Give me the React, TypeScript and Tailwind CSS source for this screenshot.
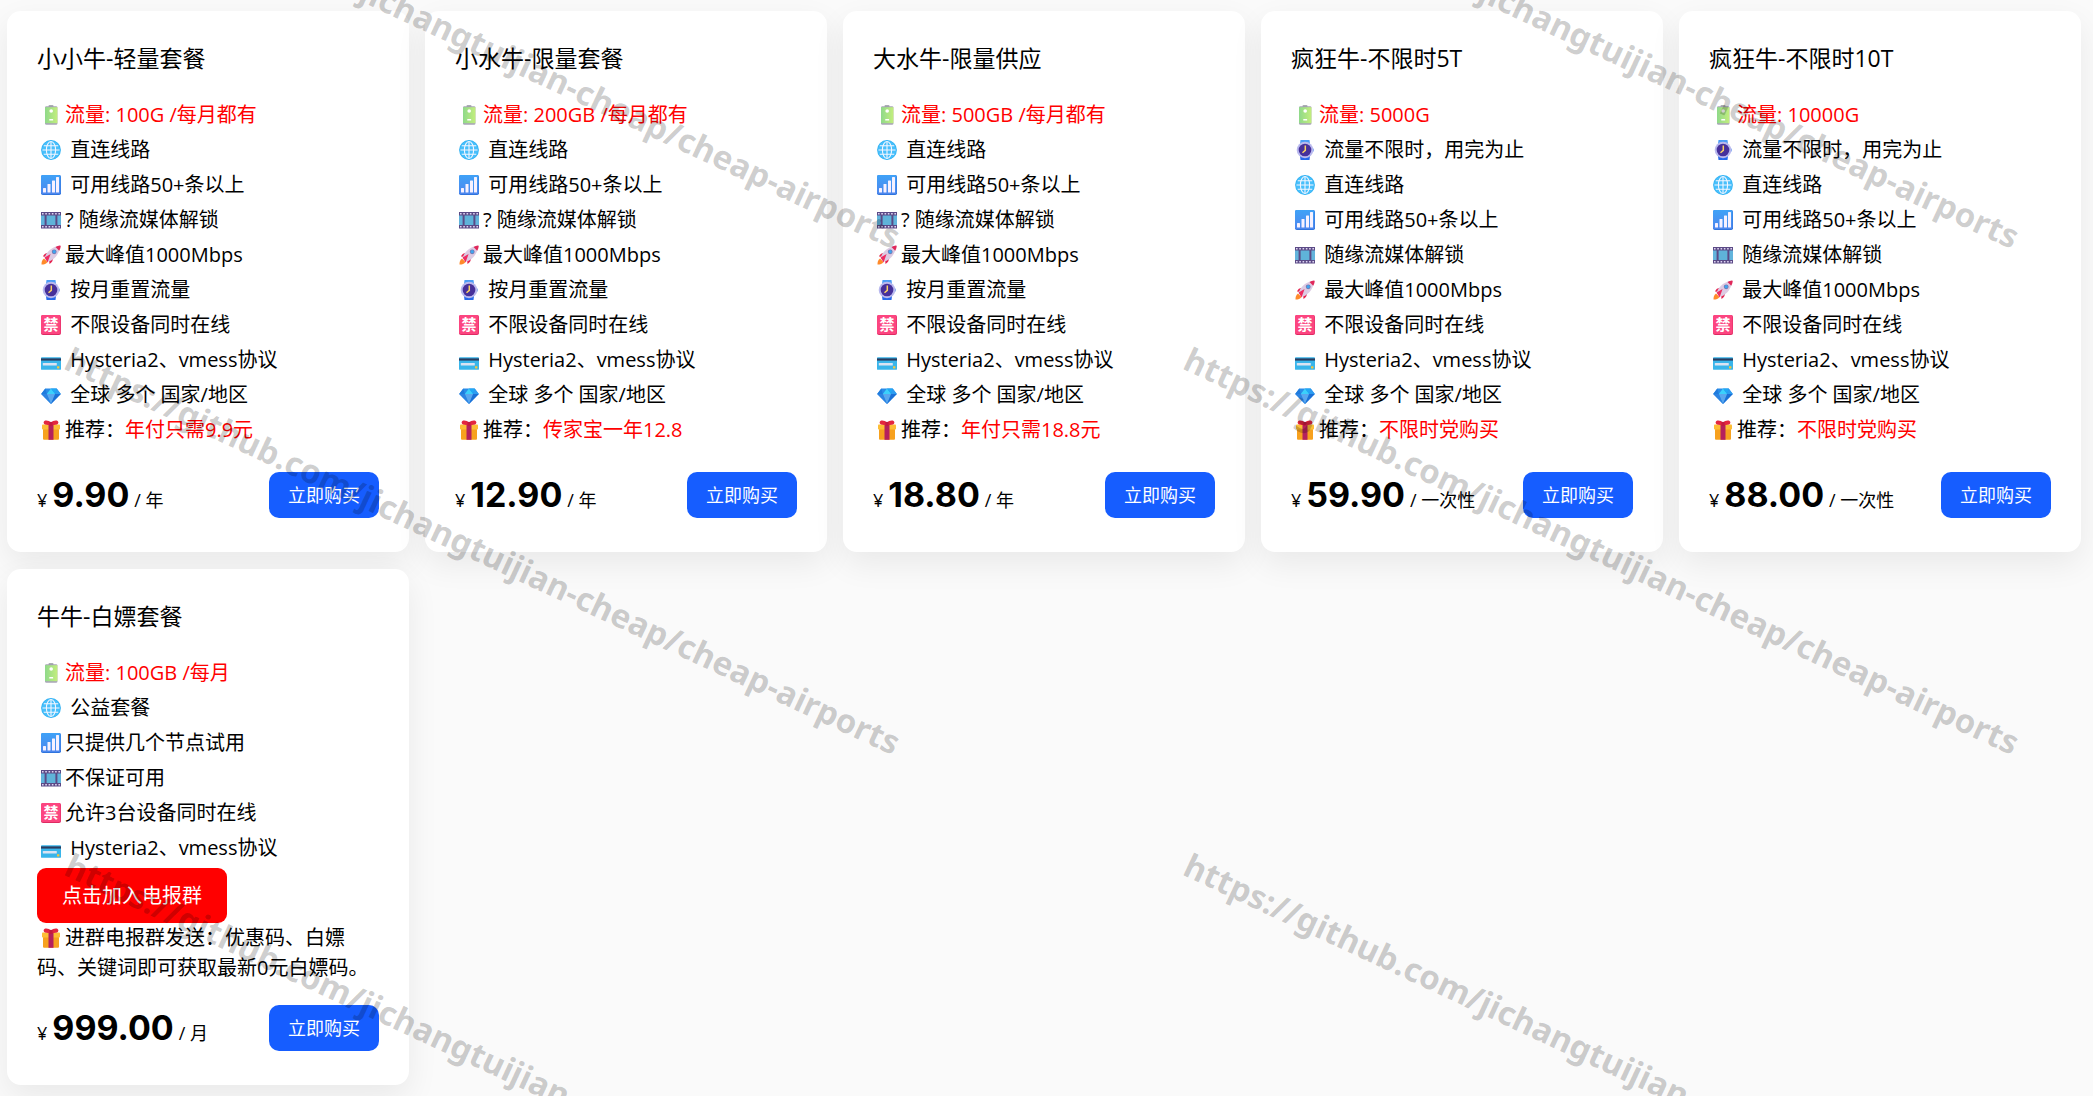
import React from "react";

type IconName =
  | "battery" | "globe" | "bars" | "film" | "rocket"
  | "watch" | "ban" | "card" | "gem" | "gift";

function Shape({ name }: { name: IconName }) {
  switch (name) {
    case "battery":
      return (
        <>
          <rect x="7.5" y="0.2" width="5" height="2" rx="0.8" fill="#8f9299" />
          <rect x="4" y="1.2" width="12.4" height="18.6" rx="1.4" fill="#a9a5b8" />
          <rect x="4" y="2.2" width="12.4" height="16" fill="url(#batteryFill)" />
          <circle cx="10.2" cy="6" r="1.8" fill="#fff" />
          <rect x="8.2" y="14" width="4" height="1.6" rx="0.4" fill="#fff" />
        </>
      );
    case "globe":
      return (
        <>
          <circle cx="10" cy="10" r="9.9" fill="#2eb0f2" />
          <circle cx="10" cy="10" r="9.2" fill="#48bffb" />
          <g fill="none" stroke="#f3f6ff" strokeWidth="1.1">
            <path d="M10 1.500v17M1.500 10h17M2.800 5.800h14.400M2.800 14.200h14.400" />
            <ellipse cx="10" cy="10" rx="4.6" ry="8.5" />
          </g>
        </>
      );
    case "bars":
      return (
        <>
          <rect width="20" height="20" rx="1.8" fill="#2f74dd" />
          <rect width="19.5" height="19" rx="1.6" fill="url(#barsFill)" />
          <g fill="#f6f1ff">
            <rect x="2" y="13" width="3" height="4.5" rx="0.5" />
            <rect x="6.5" y="9" width="3" height="8.5" rx="0.5" />
            <rect x="11" y="5.5" width="3" height="12" rx="0.5" />
            <rect x="15" y="2" width="3" height="15.5" rx="0.5" />
          </g>
        </>
      );
    case "film":
      return (
        <>
          <rect y="2" width="20" height="16.5" fill="#5b4a86" />
          <rect y="5.5" width="3.6" height="9.5" fill="#62b4dc" />
          <rect x="5.6" y="5.5" width="8.8" height="9.5" fill="#5fb3d9" />
          <rect x="16.4" y="5.5" width="3.6" height="9.5" fill="#62b4dc" />
          <path d="M1 3.800h18M1 16.700h18" stroke="#ded4f2" strokeWidth="1.5" strokeDasharray="1.6 1.68" />
        </>
      );
    case "rocket":
      return (
        <>
          <path d="M0.500 19.500c0-3 0.500-4.500 2.500-6l3.500 3.500c-1.500 2-3 2.500-6 2.500z" fill="#ff8a2a" />
          <path d="M7 8C4.500 8 3 9 2 11.500L6 12zM12 13c0 2.500-1 4.500-3.500 6L8 14z" fill="#e5234f" />
          <path d="M3.600 13.200c1.200-5 5.600-10.800 14.600-12.400 0.700 0 1 0.400 1 1C17.600 10.800 12 15.600 7 16.800z" fill="#dccbe3" />
          <path d="M14.500 2c1.500-0.800 3-1.200 4.500-1.400 0.500 0 0.800 0.300 0.700 0.800-0.200 1.500-0.700 3-1.500 4.300z" fill="#e0285a" />
          <circle cx="13.2" cy="6.8" r="2.4" fill="#7d70a8" />
          <circle cx="13.2" cy="6.8" r="1.7" fill="#3fa4ee" />
          <path d="M3.600 12.600L9.600 9l-2 5.400-1 3.200z" fill="#ee2c62" />
        </>
      );
    case "watch":
      return (
        <>
          <path d="M5.500 0h9l0.500 4H5z" fill="#4b9cf5" />
          <path d="M5 16h10l-0.500 4h-9z" fill="#2668ea" />
          <rect x="17" y="8.5" width="2" height="3" rx="0.6" fill="#8db2f0" />
          <circle cx="10" cy="10" r="8.3" fill="#b9b9ee" />
          <circle cx="10" cy="10" r="6.3" fill="#46309a" />
          <path d="M10.300 5.500v4.800l-2.800 2.500" fill="none" stroke="#fbd264" strokeWidth="1.5" />
        </>
      );
    case "ban":
      return (
        <>
          <rect width="20" height="20" rx="2" fill="#de2b62" />
          <rect width="19.5" height="19" rx="1.8" fill="#fc4580" />
          <text x="10" y="15" textAnchor="middle" fontSize="15" fontWeight="700" fill="#fff">禁</text>
        </>
      );
    case "card":
      return (
        <>
          <rect y="7.2" width="20" height="12.6" rx="0.9" fill="#39b5ea" />
          <path d="M0 8.400h20v2.200H0z" fill="#2b3c5e" />
          <rect x="1.8" y="13" width="14" height="2.6" rx="0.5" fill="#dbe3f2" />
          <rect x="16" y="16.2" width="2.4" height="2.2" rx="0.4" fill="#f5c63d" />
        </>
      );
    case "gem":
      return (
        <>
          <path d="M4.300 3.600h11.400L19.800 9 10 19 0.200 9z" fill="#2b8ce8" />
          <path d="M4.300 3.600L0.200 9h5.600z" fill="#1f7bdd" />
          <path d="M5.800 9L10 3.600 14.200 9z" fill="#3bd0fb" />
          <path d="M10 3.600h5.700L14.200 9z" fill="#21a8f5" />
          <path d="M15.700 3.600L19.800 9h-5.600z" fill="#2d9cf0" />
          <path d="M5.800 9h8.400L10 19z" fill="#5aa7ee" />
          <path d="M0.200 9h5.600L10 19z" fill="#2c83e2" />
          <path d="M14.200 9h5.600L10 19z" fill="#1b70d6" />
        </>
      );
    case "gift":
      return (
        <>
          <rect x="2" y="8.5" width="16" height="11.3" rx="1" fill="#f7a11e" />
          <rect x="1" y="4.5" width="18" height="5" rx="0.8" fill="#fdbd35" />
          <rect x="7.5" y="4.5" width="5" height="15.3" fill="#b5205c" />
          <path d="M10 4.800C6.500 5.300 2.800 5.200 2.600 2.600 2.500-0.600 8 0 10 2.600 12 0 17.500-0.600 17.400 2.600 17.200 5.200 13.500 5.300 10 4.800z" fill="#e3263f" />
          <path d="M8.400 1.900h3.200v4H8.400z" fill="#c31a3e" />
        </>
      );
  }
}

function Icon({ name }: { name: IconName }) {
  return (
    <svg viewBox="0 0 20 20" aria-hidden="true" className="mr-1 ml-1 inline-block size-5 align-[-3px]">
      <Shape name={name} />
    </svg>
  );
}

type Feature = { icon: IconName; text?: string; red?: string; space?: boolean };
type Plan = {
  title: string;
  features: Feature[];
  price: string;
  period: string;
  group?: boolean;
};

const limited = (amount: string, tip: string): Feature[] => [
  { icon: "battery", red: `流量: ${amount} /每月都有` },
  { icon: "globe", text: "直连线路", space: true },
  { icon: "bars", text: "可用线路50+条以上", space: true },
  { icon: "film", text: "? 随缘流媒体解锁" },
  { icon: "rocket", text: "最大峰值1000Mbps" },
  { icon: "watch", text: "按月重置流量", space: true },
  { icon: "ban", text: "不限设备同时在线", space: true },
  { icon: "card", text: "Hysteria2、vmess协议", space: true },
  { icon: "gem", text: "全球 多个 国家/地区", space: true },
  { icon: "gift", text: "推荐：", red: tip },
];

const unlimited = (amount: string): Feature[] => [
  { icon: "battery", red: `流量: ${amount}` },
  { icon: "watch", text: "流量不限时，用完为止", space: true },
  { icon: "globe", text: "直连线路", space: true },
  { icon: "bars", text: "可用线路50+条以上", space: true },
  { icon: "film", text: "随缘流媒体解锁", space: true },
  { icon: "rocket", text: "最大峰值1000Mbps", space: true },
  { icon: "ban", text: "不限设备同时在线", space: true },
  { icon: "card", text: "Hysteria2、vmess协议", space: true },
  { icon: "gem", text: "全球 多个 国家/地区", space: true },
  { icon: "gift", text: "推荐：", red: "不限时党购买" },
];

const plans: Plan[] = [
  { title: "小小牛-轻量套餐", features: limited("100G", "年付只需9.9元"), price: "9.90", period: "年" },
  { title: "小水牛-限量套餐", features: limited("200GB", "传家宝一年12.8"), price: "12.90", period: "年" },
  { title: "大水牛-限量供应", features: limited("500GB", "年付只需18.8元"), price: "18.80", period: "年" },
  { title: "疯狂牛-不限时5T", features: unlimited("5000G"), price: "59.90", period: "一次性" },
  { title: "疯狂牛-不限时10T", features: unlimited("10000G"), price: "88.00", period: "一次性" },
  {
    title: "牛牛-白嫖套餐",
    features: [
      { icon: "battery", red: "流量: 100GB /每月" },
      { icon: "globe", text: "公益套餐", space: true },
      { icon: "bars", text: "只提供几个节点试用" },
      { icon: "film", text: "不保证可用" },
      { icon: "ban", text: "允许3台设备同时在线" },
      { icon: "card", text: "Hysteria2、vmess协议", space: true },
    ],
    price: "999.00",
    period: "月",
    group: true,
  },
];

function PlanCard({ plan }: { plan: Plan }) {
  return (
    <article className="rounded-[14px] bg-white px-[30px] pt-[30px] pb-[34px] shadow-[0_12px_32px_rgba(0,0,0,0.07)]">
      <h2 className="mb-[25px] text-[23px] leading-[34px]">{plan.title}</h2>
      <ul className="flow-root">
        {plan.features.map((f, i) => (
          <li key={i} className="mb-[5px] whitespace-nowrap">
            <Icon name={f.icon} />
            {f.space ? " " : ""}
            {f.text}
            {f.red && <span className="text-[#ff0000]">{f.red}</span>}
          </li>
        ))}
      </ul>
      {plan.group && (
        <>
          <a href="#group" className="inline-block rounded-[9px] bg-[#ff0000] px-[25px] py-3 align-top leading-[31px] text-white">
            点击加入电报群
          </a>
          <p>
            <Icon name="gift" />
            进群电报群发送：优惠码、白嫖码、关键词即可获取最新0元白嫖码。
          </p>
        </>
      )}
      <div className="mt-[22px] flex items-center justify-between">
        <div className="flex items-baseline text-[18px]">
          <span>¥</span>
          <span className="mx-[5px] font-[Inter] text-[34px] leading-[46px] font-bold">{plan.price}</span>
          <span>/ {plan.period}</span>
        </div>
        <button type="button" className="h-[46px] w-[110px] rounded-[10px] bg-[#165dff] text-[18px] text-white">
          立即购买
        </button>
      </div>
    </article>
  );
}

const marks = [
  "left-[61px] top-[-165px]",
  "left-[1180px] top-[-165px]",
  "left-[61px] top-[341px]",
  "left-[1180px] top-[341px]",
  "left-[61px] top-[847px]",
  "left-[1180px] top-[847px]",
];

export default function App() {
  return (
    <div lang="zh-CN" className="relative min-h-screen overflow-hidden bg-[#fafafa] font-['Open_Sans','Noto_Sans_CJK_SC',sans-serif] text-[20px] leading-[30px] text-black">
      <svg width="0" height="0" className="absolute" aria-hidden="true">
        <defs>
          <linearGradient id="batteryFill">
            <stop offset="0" stopColor="#8fd98a" />
            <stop offset="1" stopColor="#c3ee7d" />
          </linearGradient>
          <linearGradient id="barsFill" x1="0" y1="0" x2="0" y2="1">
            <stop offset="0" stopColor="#3fa2f7" />
            <stop offset="1" stopColor="#4d86ee" />
          </linearGradient>
        </defs>
      </svg>
      <main className="grid grid-cols-5 items-start gap-x-4 gap-y-[17px] pt-[11px] pr-3 pb-[11px] pl-[7px]">
        {plans.map((p) => (
          <PlanCard key={p.title} plan={p} />
        ))}
      </main>
      <div aria-hidden="true" className="pointer-events-none absolute inset-0 overflow-hidden">
        {marks.map((place) => (
          <span key={place} className={`absolute origin-bottom-left rotate-25 font-['Noto_Sans','Open_Sans',sans-serif] text-[33px] leading-[30px] font-bold whitespace-nowrap text-black/20 ${place}`}>
            https://github.com/jichangtuijian-cheap/cheap-airports
          </span>
        ))}
      </div>
    </div>
  );
}
